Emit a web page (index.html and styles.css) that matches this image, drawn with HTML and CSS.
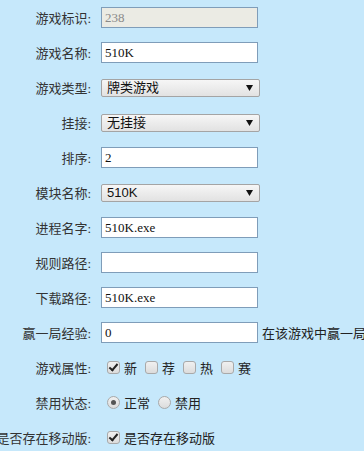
FILE: index.html
```html
<!DOCTYPE html>
<html lang="zh-CN">
<head>
    <meta charset="UTF-8">
    <title>游戏编辑</title>
    <link rel="stylesheet" href="styles.css">
</head>
<body>
    <form class="edit_form">
        <div class="row">
            <label class="label">游戏标识:</label>
            <input type="text" class="txt" value="238" disabled>
        </div>
        <div class="row">
            <label class="label">游戏名称:</label>
            <input type="text" class="txt" value="510K">
        </div>
        <div class="row">
            <label class="label">游戏类型:</label>
            <div class="sel">
                <select><option>牌类游戏</option></select>
                <svg class="arrow" width="7" height="6" viewBox="0 0 7 6"><path d="M0 0H7L3.5 6Z" fill="#111"/></svg>
            </div>
        </div>
        <div class="row">
            <label class="label">挂接:</label>
            <div class="sel">
                <select><option>无挂接</option></select>
                <svg class="arrow" width="7" height="6" viewBox="0 0 7 6"><path d="M0 0H7L3.5 6Z" fill="#111"/></svg>
            </div>
        </div>
        <div class="row">
            <label class="label">排序:</label>
            <input type="text" class="txt" value="2">
        </div>
        <div class="row">
            <label class="label">模块名称:</label>
            <div class="sel">
                <select><option>510K</option></select>
                <svg class="arrow" width="7" height="6" viewBox="0 0 7 6"><path d="M0 0H7L3.5 6Z" fill="#111"/></svg>
            </div>
        </div>
        <div class="row">
            <label class="label">进程名字:</label>
            <input type="text" class="txt" value="510K.exe">
        </div>
        <div class="row">
            <label class="label">规则路径:</label>
            <input type="text" class="txt" value="">
        </div>
        <div class="row">
            <label class="label">下载路径:</label>
            <input type="text" class="txt" value="510K.exe">
        </div>
        <div class="row">
            <label class="label">赢一局经验:</label>
            <input type="text" class="txt" value="0">
            <span class="tip">在该游戏中赢一局奖励的经验值</span>
        </div>
        <div class="row">
            <label class="label">游戏属性:</label>
            <div class="opts">
                <label class="opt"><input type="checkbox" class="chk" checked>新</label>
                <label class="opt"><input type="checkbox" class="chk">荐</label>
                <label class="opt"><input type="checkbox" class="chk">热</label>
                <label class="opt"><input type="checkbox" class="chk">赛</label>
            </div>
        </div>
        <div class="row">
            <label class="label">禁用状态:</label>
            <div class="opts">
                <label class="opt"><input type="radio" name="state" class="rad" checked>正常</label>
                <label class="opt"><input type="radio" name="state" class="rad">禁用</label>
            </div>
        </div>
        <div class="row">
            <label class="label">是否存在移动版:</label>
            <div class="opts">
                <label class="opt"><input type="checkbox" class="chk" checked>是否存在移动版</label>
            </div>
        </div>
    </form>
</body>
</html>
```

FILE: styles.css
```css
html, body{
    margin: 0;
    padding: 0;
    background: #c6e8fb;
    overflow: hidden;
}
.edit_form{
    font-family: "Liberation Serif", "Noto Sans CJK SC", serif;
    font-size: 13px;
    color: #222;
}
.row{
    display: grid;
    grid-template-columns: 91px auto;
    column-gap: 10px;
    align-items: center;
    height: 35px;
    white-space: nowrap;
}
.label{
    display: flex;
    justify-content: flex-end;
    color: #333;
}
.txt{
    box-sizing: border-box;
    width: 157px;
    height: 21px;
    margin: 0;
    padding: 1px 3px 0;
    border: 1px solid #7f9db9;
    background: #fff;
    font-family: "Liberation Serif", "Noto Sans CJK SC", serif;
    font-size: 13px;
    color: #111;
    outline: none;
}
.txt:disabled{
    background: #ebebe4;
    color: #8a8a8a;
}
.row:has(.tip){
    grid-template-columns: 91px 157px auto;
}
.tip{
    margin-left: -6px;
    color: #222;
}
.sel{
    position: relative;
    width: 159px;
    height: 18px;
}
.sel select{
    appearance: none;
    box-sizing: border-box;
    width: 100%;
    height: 100%;
    margin: 0;
    padding: 0 0 0 5px;
    border: 1px solid #a4a4a4;
    border-radius: 2px;
    background: linear-gradient(#f6f6f6, #e2e2e2);
    font-family: "Liberation Sans", "Noto Sans CJK SC", sans-serif;
    font-size: 13px;
    color: #111;
    outline: none;
}
.arrow{
    position: absolute;
    right: 7px;
    top: 6px;
}
.opts{
    display: flex;
    align-items: center;
    gap: 8px;
    padding-left: 6px;
}
.opt{
    display: flex;
    align-items: center;
    gap: 4px;
}
.chk, .rad{
    appearance: none;
    box-sizing: border-box;
    width: 13px;
    height: 13px;
    margin: 0;
    border: 1px solid #a9a9a9;
    background: linear-gradient(#f0f0f0, #dcdcdc);
    position: relative;
}
.chk{
    border-radius: 3px;
}
.chk:checked::after{
    content: "";
    position: absolute;
    left: 3px;
    top: 0px;
    width: 3px;
    height: 7px;
    border: solid #222;
    border-width: 0 2px 2px 0;
    transform: rotate(40deg);
}
.rad{
    border-radius: 50%;
}
.rad:checked::after{
    content: "";
    position: absolute;
    left: 3px;
    top: 3px;
    width: 5px;
    height: 5px;
    border-radius: 50%;
    background: #555;
}
```
